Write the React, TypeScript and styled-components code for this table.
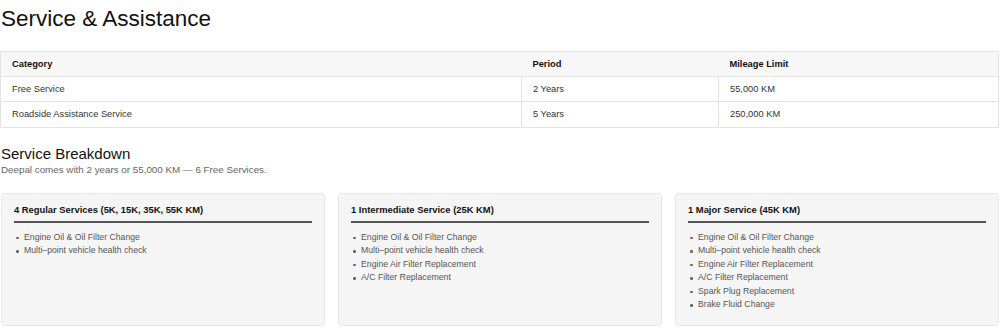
import React from "react";
import styled, { createGlobalStyle } from "styled-components";

const Global = createGlobalStyle`
  html, body { margin: 0; padding: 0; background: #fff; }
  body { font-family: "Liberation Sans", Arial, sans-serif; color: #111; }
`;

const Page = styled.div`
  padding: 0 1px;
  width: 998px;
`;

const Title = styled.h1`
  margin: 0;
  padding-top: 6px;
  font-size: 22.5px;
  font-weight: 400;
  line-height: 26px;
  color: #111;
`;

const Table = styled.table`
  margin-top: 19px;
  width: 998px;
  margin-left: -1px;
  border-collapse: collapse;
  font-size: 9.3px;
  table-layout: fixed;
`;

const Th = styled.th<{ $w: number }>`
  box-sizing: border-box;
  width: ${(p) => p.$w}px;
  text-align: left;
  font-weight: 700;
  height: 24.5px;
  padding: 0 11px;
  background: #f7f7f7;
  color: #111;
  border-top: 1px solid #e3e3e3;
  border-bottom: 1px solid #e3e3e3;
`;

const HeadRow = styled.tr`
  th:first-child { border-left: 1px solid #e3e3e3; }
  th:last-child { border-right: 1px solid #e3e3e3; }
`;

const Td = styled.td`
  height: 24.5px;
  padding: 0 11px;
  color: #333;
  border: 1px solid #e3e3e3;
`;

const SectionTitle = styled.h2`
  margin: 17px 0 0;
  font-size: 15px;
  font-weight: 400;
  line-height: 18px;
  color: #111;
`;

const Subtitle = styled.p`
  margin: 0;
  font-size: 9.8px;
  line-height: 13px;
  color: #666;
`;

const Cards = styled.div`
  margin-top: 17px;
  display: grid;
  grid-template-columns: repeat(3, 1fr);
  gap: 13px;
`;

const Card = styled.div`
  background: #f5f5f5;
  border: 1px solid #e6e6e6;
  border-radius: 4px;
  padding: 9px 12px 10px;
  min-height: 112px;
`;

const CardTitle = styled.h3`
  margin: 0;
  font-size: 9.4px;
  font-weight: 700;
  line-height: 13px;
  color: #111;
  padding-bottom: 5px;
  border-bottom: 2px solid #555;
`;

const List = styled.ul`
  list-style: none;
  margin: 8px 0 0;
  padding: 0;
`;

const Item = styled.li`
  position: relative;
  padding-left: 10px;
  font-size: 8.7px;
  line-height: 13.5px;
  color: #555;
  &::before {
    content: "";
    position: absolute;
    left: 2px;
    top: 6px;
    width: 2.5px;
    height: 2.5px;
    border-radius: 50%;
    background: #666;
  }
`;

const rows = [
  ["Free Service", "2 Years", "55,000 KM"],
  ["Roadside Assistance Service", "5 Years", "250,000 KM"],
];

const cards = [
  {
    title: "4 Regular Services (5K, 15K, 35K, 55K KM)",
    items: ["Engine Oil & Oil Filter Change", "Multi‒point vehicle health check"],
  },
  {
    title: "1 Intermediate Service (25K KM)",
    items: [
      "Engine Oil & Oil Filter Change",
      "Multi‒point vehicle health check",
      "Engine Air Filter Replacement",
      "A/C Filter Replacement",
    ],
  },
  {
    title: "1 Major Service (45K KM)",
    items: [
      "Engine Oil & Oil Filter Change",
      "Multi‒point vehicle health check",
      "Engine Air Filter Replacement",
      "A/C Filter Replacement",
      "Spark Plug Replacement",
      "Brake Fluid Change",
    ],
  },
];

export default function App() {
  return (
    <Page>
      <Global />
      <Title>Service &amp; Assistance</Title>
      <Table>
        <thead>
          <HeadRow>
            <Th $w={521}>Category</Th>
            <Th $w={197}>Period</Th>
            <Th $w={280}>Mileage Limit</Th>
          </HeadRow>
        </thead>
        <tbody>
          {rows.map((r) => (
            <tr key={r[0]}>
              {r.map((c) => (
                <Td key={c}>{c}</Td>
              ))}
            </tr>
          ))}
        </tbody>
      </Table>
      <SectionTitle>Service Breakdown</SectionTitle>
      <Subtitle>Deepal comes with 2 years or 55,000 KM — 6 Free Services.</Subtitle>
      <Cards>
        {cards.map((c) => (
          <Card key={c.title}>
            <CardTitle>{c.title}</CardTitle>
            <List>
              {c.items.map((i) => (
                <Item key={i}>{i}</Item>
              ))}
            </List>
          </Card>
        ))}
      </Cards>
    </Page>
  );
}
